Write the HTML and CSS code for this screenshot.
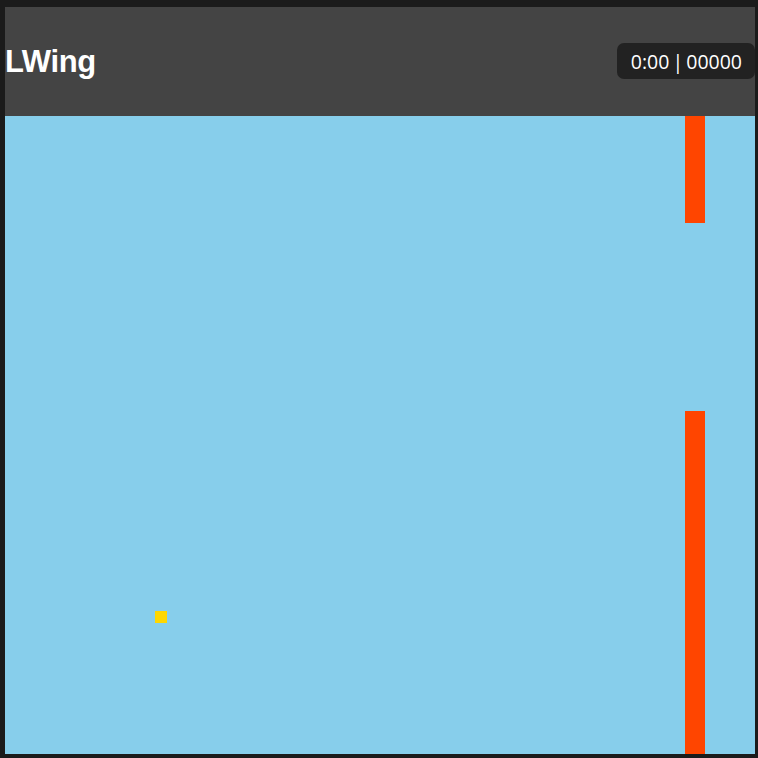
FILE: index.html
```html
<!DOCTYPE html>
<html lang="en">
<head>
<meta charset="utf-8">
<title>LWing</title>
<link rel="stylesheet" href="styles.css">
</head>
<body>
<div class="app">
  <header class="topbar">
    <h1 class="title">LWing</h1>
    <div class="hud">0:00 | 00000</div>
  </header>
  <main class="sky">
    <div class="pipe pipe-top"></div>
    <div class="pipe pipe-bottom"></div>
    <div class="bird"></div>
  </main>
</div>
</body>
</html>
```

FILE: styles.css
```css
html, body {
  margin: 0;
  padding: 0;
  background: #1b1b1b;
}
.app {
  width: 750px;
  margin: 7px 3px 4px 5px;
  display: flex;
  flex-direction: column;
}
.topbar {
  height: 109px;
  background: #444444;
  display: flex;
  align-items: center;
  justify-content: space-between;
}
.title {
  margin: 0;
  font-family: "Liberation Sans", Arial, sans-serif;
  font-weight: bold;
  font-size: 31px;
  letter-spacing: -0.4px;
  color: #ffffff;
  line-height: 1;
}
.hud {
  height: 36px;
  box-sizing: border-box;
  padding: 0 13px 0 14px;
  display: flex;
  align-items: center;
  background: #222222;
  color: #ffffff;
  border-radius: 7px;
  font-family: "Open Sans", sans-serif;
  font-size: 19.5px;
  word-spacing: -2px;
  margin-top: -1px;
}
.sky {
  position: relative;
  height: 638px;
  background: #87ceeb;
  overflow: hidden;
}
.pipe {
  position: absolute;
  left: 680px;
  width: 19.5px;
  background: #ff4500;
}
.pipe-top {
  top: 0;
  height: 107px;
}
.pipe-bottom {
  top: 295px;
  bottom: 0;
}
.bird {
  position: absolute;
  left: 150px;
  top: 495px;
  width: 12px;
  height: 12px;
  background: #ffd700;
}
```
